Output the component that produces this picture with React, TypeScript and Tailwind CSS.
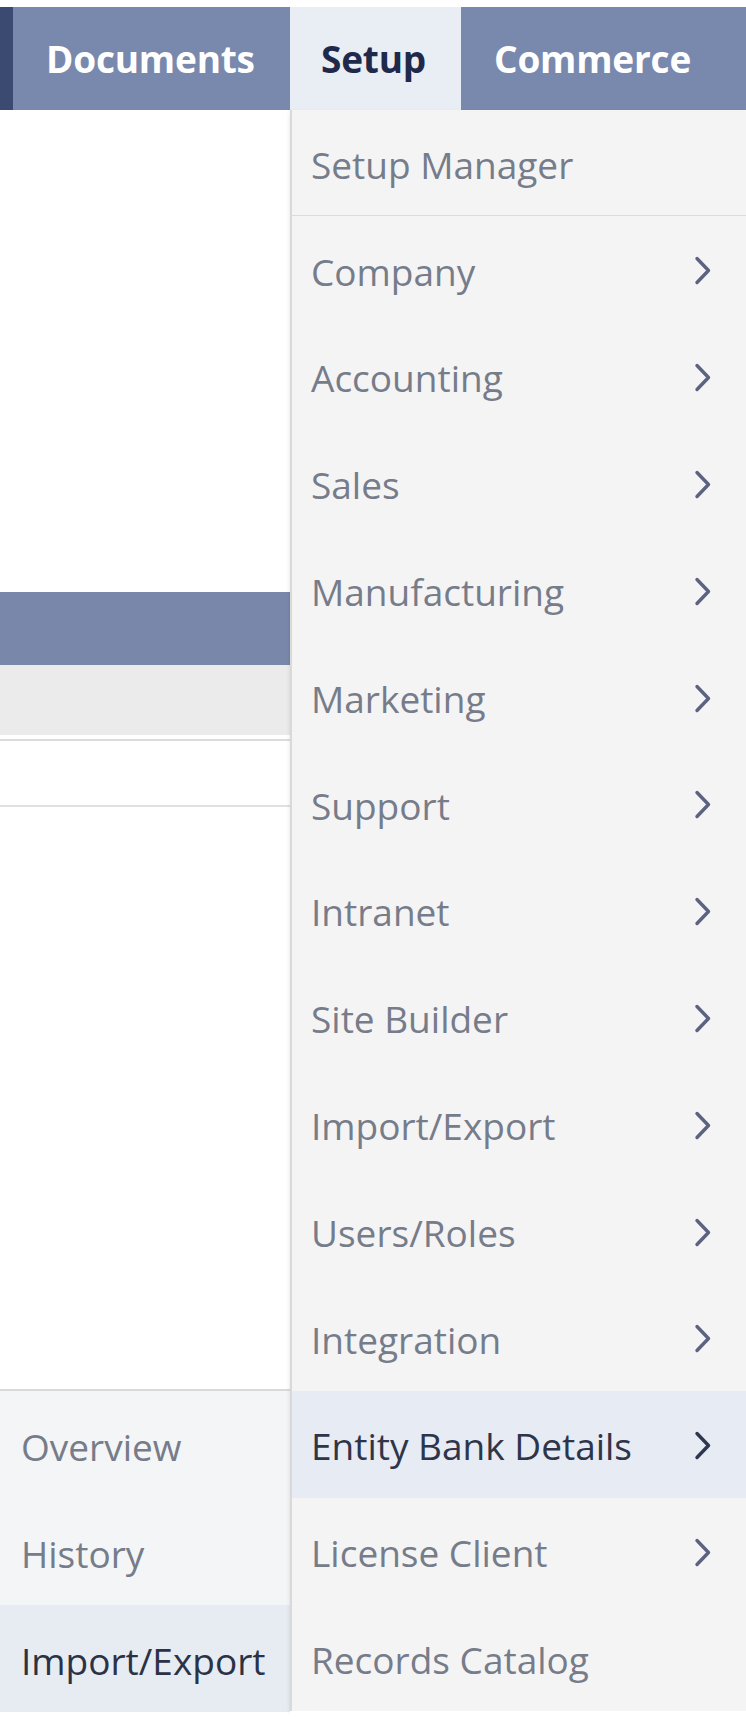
import { ReactNode } from 'react';

const setupItems: { label: string; sub: boolean; active?: boolean }[] = [
  { label: 'Company', sub: true },
  { label: 'Accounting', sub: true },
  { label: 'Sales', sub: true },
  { label: 'Manufacturing', sub: true },
  { label: 'Marketing', sub: true },
  { label: 'Support', sub: true },
  { label: 'Intranet', sub: true },
  { label: 'Site Builder', sub: true },
  { label: 'Import/Export', sub: true },
  { label: 'Users/Roles', sub: true },
  { label: 'Integration', sub: true },
  { label: 'Entity Bank Details', sub: true, active: true },
  { label: 'License Client', sub: true },
  { label: 'Records Catalog', sub: false },
];

const bankItems = [
  { label: 'Overview' },
  { label: 'History' },
  { label: 'Import/Export', active: true },
];

const Chevron = ({ dark }: { dark?: boolean }) => (
  <svg width="20" height="30" viewBox="0 0 20 30" className="shrink-0">
    <path
      d="M4 2.5 L15.5 14.5 L4 26.5"
      fill="none"
      stroke={dark ? '#2f3650' : '#5b6380'}
      strokeWidth="3.4"
      strokeLinecap="round"
      strokeLinejoin="round"
    />
  </svg>
);

const NavTab = ({ children, active }: { children: ReactNode; active?: boolean }) => (
  <div
    className={
      active
        ? 'h-full flex items-center bg-[#e9edf4] text-[#1f2a4b] px-[31px] w-[171px]'
        : 'h-full flex items-center text-white'
    }
  >
    {children}
  </div>
);

export default function App() {
  return (
    <div
      className="w-[746px] h-[1728px] bg-white overflow-hidden flex flex-col"
      style={{ fontFamily: '"Open Sans", "Noto Sans", sans-serif' }}
    >
      {/* top strip */}
      <div className="h-[7px] bg-white shrink-0" />

      {/* nav bar */}
      <div className="h-[103px] shrink-0 flex bg-[#7989ae] text-[37px] font-bold tracking-[-0.2px]">
        <div className="w-[13px] h-full bg-[#3a4a70]" />
        <div className="w-[277px] h-full flex items-center pl-[33px] text-white">Documents</div>
        <NavTab active>Setup</NavTab>
        <div className="flex-1 h-full flex items-center pl-[33px] text-white">Commerce</div>
      </div>

      {/* body */}
      <div className="flex-1 flex min-h-0">
        {/* left column: page content + bank details flyout */}
        <div className="w-[290px] shrink-0 flex flex-col">
          <div className="h-[482px] bg-white" />
          <div className="h-[73px] bg-[#7988aa]" />
          <div className="h-[70px] bg-[#ebebeb]" />
          <div className="h-[4px] bg-white" />
          <div className="h-[2px] bg-[#dcdcdc]" />
          <div className="h-[64px] bg-white" />
          <div className="h-[2px] bg-[#e0e0e0]" />
          <div className="flex-1 bg-white" />
          <div className="border-t-[2px] border-[#dadada] bg-[#f4f5f6] shadow-[0_2px_3px_rgba(0,0,0,0.12)]">
            {bankItems.map((it) => (
              <div
                key={it.label}
                className={
                  it.active
                    ? 'h-[107px] flex items-center pt-[4px] pl-[21px] text-[37px] text-[#2c3245] bg-[#e7ebf2]'
                    : 'h-[107px] flex items-center pt-[4px] pl-[21px] text-[37px] text-[#767c89]'
                }
              >
                {it.label}
              </div>
            ))}
          </div>
          <div className="h-[16px] bg-white" />
        </div>

        {/* setup dropdown */}
        <div className="flex-1 flex flex-col">
          <div className="bg-[#f4f4f5] border-l-[2px] border-[#d9d9d9] shadow-[0_2px_4px_rgba(0,0,0,0.12)]">
            <div className="h-[106px] flex items-center pt-[4px] pl-[19px] text-[37px] text-[#767c89] border-b-[1px] border-[#dcdcdc]">
              Setup Manager
            </div>
            {setupItems.map((it) => (
              <div
                key={it.label}
                className={
                  it.active
                    ? 'h-[106.8px] flex items-center justify-between pt-[4px] pl-[19px] pr-[33px] text-[37px] text-[#2e3549] bg-[#e7ebf3]'
                    : 'h-[106.8px] flex items-center justify-between pt-[4px] pl-[19px] pr-[33px] text-[37px] text-[#767c89]'
                }
              >
                <span>{it.label}</span>
                {it.sub && <Chevron dark={it.active} />}
              </div>
            ))}
          </div>
          <div className="flex-1 bg-white" />
        </div>
      </div>
    </div>
  );
}
